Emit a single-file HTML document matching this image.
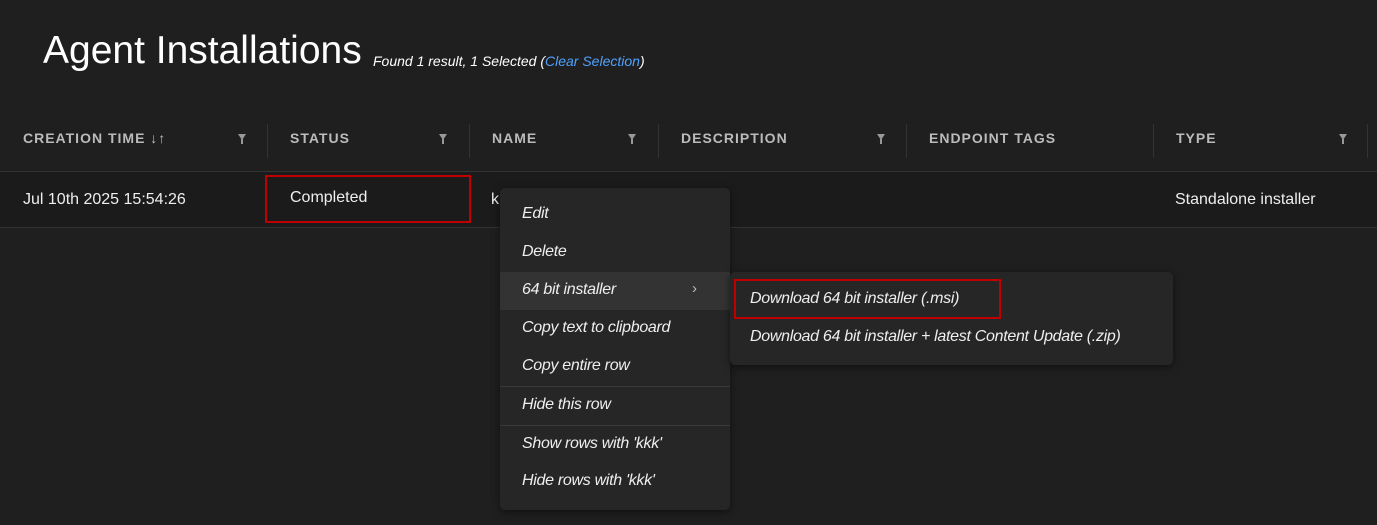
<!DOCTYPE html>
<html><head><style>
body{margin:0;width:1377px;height:525px;background:#1f1f1f;font-family:"Liberation Sans",sans-serif;color:#eee;position:relative;overflow:hidden}
.a{position:absolute;white-space:nowrap}
.h{font-size:14px;font-weight:bold;letter-spacing:1px;color:#bbb;top:130px}
.f{top:134px;width:0;height:0;border-left:4px solid transparent;border-right:4px solid transparent;border-top:6px solid #999}
.f:after{content:"";position:absolute;left:-1px;top:-1px;width:2px;height:5px;background:#999}
.sep{top:124px;width:1px;height:34px;background:#333}
.m{font-style:italic;font-size:16px;letter-spacing:-0.3px;color:#eee}
</style></head><body>
<div class="a" style="left:43px;top:29px;font-size:39px;color:#fff">Agent Installations</div>
<div class="a" style="left:373px;top:53px;font-size:14px;font-style:italic;color:#fff">Found 1 result, 1 Selected (<span style="color:#4ea1ff">Clear Selection</span>)</div>
<div class="a" style="left:0;top:171px;width:1377px;height:1px;background:#333"></div>
<div class="a" style="left:0;top:227px;width:1377px;height:1px;background:#333"></div>
<div class="a h" style="left:23px">CREATION TIME ↓↑</div><div class="a f" style="left:238px"></div><div class="a sep" style="left:267px"></div>
<div class="a h" style="left:290px">STATUS</div><div class="a f" style="left:439px"></div><div class="a sep" style="left:469px"></div>
<div class="a h" style="left:492px">NAME</div><div class="a f" style="left:628px"></div><div class="a sep" style="left:658px"></div>
<div class="a h" style="left:681px">DESCRIPTION</div><div class="a f" style="left:877px"></div><div class="a sep" style="left:906px"></div>
<div class="a h" style="left:929px">ENDPOINT TAGS</div><div class="a sep" style="left:1153px"></div>
<div class="a h" style="left:1176px">TYPE</div><div class="a f" style="left:1339px"></div><div class="a sep" style="left:1367px"></div>
<div class="a" style="left:0;top:172px;width:1377px;height:55px;background:#1b1b1b"></div>
<div class="a" style="left:23px;top:191px;font-size:16px">Jul 10th 2025 15:54:26</div>
<div class="a" style="left:265px;top:175px;width:202px;height:44px;border:2px solid #c00000"></div>
<div class="a" style="left:290px;top:189px;font-size:16px">Completed</div>
<div class="a" style="left:491px;top:191px;font-size:16px">k</div>
<div class="a" style="left:1175px;top:191px;font-size:16px">Standalone installer</div>
<div class="a" style="left:500px;top:188px;width:230px;height:322px;background:#262626;border-radius:5px;box-shadow:0 2px 8px rgba(0,0,0,.5)"></div>
<div class="a" style="left:500px;top:272px;width:230px;height:38px;background:#333"></div>
<div class="a" style="left:500px;top:386px;width:230px;height:1px;background:#3a3a3a"></div>
<div class="a" style="left:500px;top:425px;width:230px;height:1px;background:#3a3a3a"></div>
<div class="a m" style="left:522px;top:205px">Edit</div>
<div class="a m" style="left:522px;top:243px">Delete</div>
<div class="a m" style="left:522px;top:281px">64 bit installer</div>
<div class="a" style="left:692px;top:280px;font-size:15px;color:#bbb">›</div>
<div class="a m" style="left:522px;top:319px">Copy text to clipboard</div>
<div class="a m" style="left:522px;top:357px">Copy entire row</div>
<div class="a m" style="left:522px;top:396px">Hide this row</div>
<div class="a m" style="left:522px;top:435px">Show rows with 'kkk'</div>
<div class="a m" style="left:522px;top:472px">Hide rows with 'kkk'</div>
<div class="a" style="left:730px;top:272px;width:443px;height:93px;background:#262626;border-radius:5px;box-shadow:0 2px 8px rgba(0,0,0,.5)"></div>
<div class="a" style="left:734px;top:279px;width:263px;height:36px;border:2px solid #c00000"></div>
<div class="a m" style="left:750px;top:290px">Download 64 bit installer (.msi)</div>
<div class="a m" style="left:750px;top:328px">Download 64 bit installer + latest Content Update (.zip)</div>
</body></html>
